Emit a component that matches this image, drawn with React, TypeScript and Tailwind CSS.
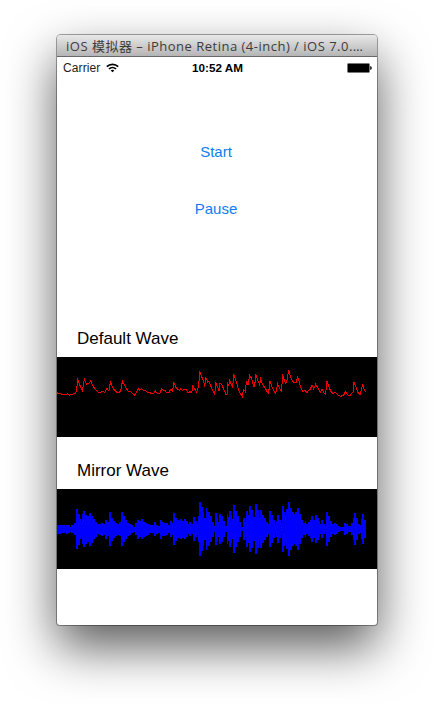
const BARS: [number, number][] = [
  // [x offset in px, amplitude in px]
  [0, 4.5], [2, 4.5], [4, 4.3], [6, 4], [8, 2.5], [9, 4.5], [11, 4], [13, 2.5], [14, 4], [15.5, 4], [17, 6],
  [19, 20], [21, 15.5], [23, 10], [24.3, 7.5], [25, 15], [26, 18], [28, 14.5], [30, 13], [32, 16.5], [34, 13.5], [36, 10], [38, 7.5], [40, 5],
  [42, 5.5], [44, 6.5], [46, 5.5], [48, 9.5], [50, 7], [52, 16.8], [54, 11.5], [56, 8.5], [58, 6.5], [60, 5.5], [62, 7], [64, 17],
  [66, 13], [68, 9.5], [70, 6.5], [72, 5.5], [74, 4], [76, 2.5], [78, 6], [80, 9.5], [82, 8], [83.5, 10], [85.5, 7.5], [87.5, 6.5],
  [89.5, 5.5], [91.5, 4], [93.5, 4], [95, 4], [97, 7], [99, 4.5], [101, 3.5], [103, 9.5], [105, 7.3], [107, 6.5], [109, 5.8], [111, 4],
  [112.5, 8], [114.5, 6], [116, 16], [118, 11.5], [120, 9], [122, 8], [123, 10], [125, 8.5], [127, 9.7], [129, 8.3], [131, 5], [132.3, 7], [134, 5],
  [135.5, 12], [137.5, 8], [139.5, 6], [140.5, 13], [142, 27], [144, 22], [146, 17], [147.3, 11], [148.5, 21], [150.3, 17], [151.7, 17.3], [153, 13],
  [155, 7.5], [157, 3], [158, 16], [160, 12], [161, 7.5], [162.3, 15.3], [164.3, 13.3], [166.3, 8], [168.3, 3], [169.7, 15.3], [171, 12], [172, 18],
  [174, 14], [175.3, 10], [176, 24], [178, 18], [180, 12.7], [182, 7.5], [184, 2], [186.3, 11.3], [188.3, 7.5], [189.3, 18], [191.3, 14],
  [192, 22.7], [194, 18.7], [196, 12], [198, 24.7], [200, 19.3], [202, 11.5], [203, 18.7], [205, 14], [207, 10.7], [209, 7.5], [211, 5],
  [212, 18], [214, 14], [216, 9], [218, 4], [219.3, 8], [220.3, 14], [222.3, 9], [224, 6], [225, 23], [227, 17.3], [228.3, 14],
  [229.3, 20], [231, 27.3], [233, 21.3], [235, 16.7], [237, 15.3], [238.3, 17.3], [240, 21.3], [242, 14.7], [244, 9.3], [245.7, 6],
  [247.7, 8], [249.3, 4.7], [250.7, 7.3], [252.7, 9.3], [254.3, 13.3], [256.3, 9], [258, 14], [260, 10.7], [262, 8], [263, 5.3],
  [264.3, 9.3], [266.3, 4.7], [268, 3.3], [269, 17.3], [271, 12.7], [273, 8], [275, 5.3], [277, 6], [279, 5.3], [281, 2.7], [283, 2],
  [285, 2], [287, 6], [289, 5.3], [291, 2.7], [293, 2.7], [294.3, 6], [296, 11.3], [297, 16.3], [299, 10.7], [301, 5.3], [303, 4],
  [304.3, 10], [305.3, 14.7], [307, 8.7], [308.5, 6],
];

// Waveform in red, drawn with samples falling towards the previous bar's foot before each attack.
const RED: [number, number][] = [
  [0, 98], [6, 100], [12, 101], [20, 104], [26, 105], [33, 101], [39, 106], [48, 103], [57, 100], [61, 88], [63, 55], [66, 66], [72, 80], [78, 92], [81, 68], [84, 59], [90, 73], [97, 70], [103, 62], [109, 77], [115, 86], [121, 92], [127, 99], [133, 97], [139, 94], [145, 98], [151, 85], [157, 93], [162, 66], [168, 82], [174, 90], [180, 96], [186, 98], [192, 94], [198, 63], [204, 76], [210, 87], [216, 94], [222, 95], [228, 101], [235, 106], [240, 96], [246, 86], [250, 91], [255, 85], [262, 92], [268, 93], [274, 97], [280, 98], [286, 101], [292, 99], [297, 93], [303, 101], [310, 102], [315, 87], [321, 91], [328, 93],
];
const RED_MID: [number, number][] = [
  [9, 91], [15, 92], [21, 97], [27, 99], [33, 88], [39, 94], [42, 66], [48, 81], [54, 88], [60, 91], [64, 86], [68, 92], [74, 87], [78, 87], [85, 98], [91, 95], [96, 98], [99, 78], [105, 87], [111, 96], [117, 76], [120, 32], [126, 50], [132, 65], [135, 80], [138, 51], [144, 66], [148, 65], [152, 75], [158, 90], [165, 104], [168, 67], [174, 83], [178, 92], [180, 70], [187, 74], [192, 88], [199, 104], [202, 104], [204, 71], [207, 76], [210, 61], [216, 77], [219, 82], [222, 43], [228, 60], [234, 80], [240, 98], [248, 110], [251, 88], [257, 95], [260, 62], [265, 75], [270, 46], [276, 56], [282, 80], [285, 80], [288, 41], [294, 60], [300, 75], [303, 58], [309, 74], [315, 82], [321, 91], [325, 99],
];
const RED_END: [number, number][] = [
  [0, 78], [5, 86], [11, 98], [15, 101], [18, 62], [24, 78], [30, 92], [36, 101], [42, 72], [48, 84], [54, 97], [56, 43], [62, 62], [66, 70], [70, 60], [75, 31], [80, 50], [86, 63], [91, 68], [97, 68], [102, 50], [107, 68], [112, 84], [118, 95], [124, 91], [130, 98], [135, 90], [140, 88], [145, 74], [150, 87], [156, 73], [162, 83], [170, 97], [175, 86], [181, 100], [186, 103], [189, 62], [195, 78], [201, 94], [208, 101], [216, 97], [223, 106], [232, 109], [240, 105], [246, 94], [252, 105], [259, 108], [265, 98], [268, 96], [271, 66], [277, 82], [283, 98], [290, 104], [293, 88], [297, 71], [301, 86], [306, 96],
];

const LINE = [
  ...RED.map(([x, y]) => [x / 3 - 0.5, y / 3 + 3]),
  ...RED_MID.map(([x, y]) => [x / 3 + 102.7, y / 3 + 3]),
  ...RED_END.map(([x, y]) => [x / 3 + 206.7, y / 3 + 3]),
];
const linePath = 'M' + LINE.map(([x, y]) => `${x.toFixed(1)} ${y.toFixed(1)}`).join('L');

function stepEdge(sign: number) {
  return BARS.flatMap(([x, a], i) => {
    const end = i < BARS.length - 1 ? BARS[i + 1][0] : 309;
    return [`${x} ${40 + sign * a}`, `${end} ${40 + sign * a}`];
  });
}
const mirrorPath = 'M' + [...stepEdge(-1), ...stepEdge(1).reverse()].join('L') + 'Z';

function StatusBar() {
  return (
    <div className="grid h-5 grid-cols-3 items-center pl-1.5 pr-[5px] text-[12px] leading-5 text-black">
      <div className="flex items-center gap-1.5">
        <span className="tracking-[0.1px] text-[#222]">Carrier</span>
        <svg width="13" height="10" viewBox="0 0 13 10" fill="none" stroke="#000" strokeWidth="1.7">
          <path d="M0.8 3.7C4 .5 9 .5 12.2 3.7" />
          <path d="M3 6C5 4 8 4 10 6" />
          <path d="M6.5 9.3 4.7 7.5Q6.5 6 8.3 7.5Z" fill="#000" stroke="none" />
        </svg>
      </div>
      <div className="whitespace-nowrap pt-px text-center text-[11.7px] font-bold">10:52 AM</div>
      <div className="flex justify-end">
        <svg width="25" height="10" viewBox="0 0 25 10">
          <rect x="0.5" y="0.5" width="22" height="9" rx="1" fill="#000" stroke="#777" />
          <path d="M23 3Q25 3.5 25 5T23 7Z" fill="#333" />
        </svg>
      </div>
    </div>
  );
}

export default function App() {
  return (
    <div className="flex h-[704px] w-[434px] justify-center overflow-hidden bg-white pt-[35px] font-['Liberation_Sans',Arial,sans-serif]">
      <div className="h-[590px] w-80 rounded-t-[4px] rounded-b-[3px] bg-white shadow-[0_0_0_1px_rgba(0,0,0,0.35),0_22px_50px_rgba(0,0,0,0.65)]">
        <div className="h-[22px] overflow-hidden rounded-t-[4px] border-b border-[#686868] bg-linear-to-b from-[#e8e8e8] to-[#b5b5b5] pl-[9px] font-['Open_Sans','Noto_Sans_CJK_SC',sans-serif] text-[13px] leading-[23px] tracking-[0.5px] whitespace-nowrap text-[#3c3c3c]">
          iOS 模拟器 – iPhone Retina (4-inch) / iOS 7.0.…
        </div>
        <StatusBar />
        <div className="flex flex-col items-center pt-[66px] pr-0.5 text-[15px] leading-[18px] text-[#127bf4]">
          <button>Start</button>
          <button className="mt-[39px]">Pause</button>
        </div>
        <h2 className="mt-[111px] h-[28px] pl-5 text-[17px] leading-5 text-black">Default Wave</h2>
        <svg width="320" height="80" viewBox="0 0 320 80" className="block bg-black">
          <path d={linePath} fill="none" stroke="#ee0000" strokeWidth="1" shapeRendering="crispEdges" />
        </svg>
        <h2 className="mt-[24px] h-[28px] pl-5 text-[17px] leading-5 text-black">Mirror Wave</h2>
        <svg width="320" height="80" viewBox="0 0 320 80" className="block bg-black">
          <path d={mirrorPath} fill="#0000ff" shapeRendering="crispEdges" />
        </svg>
      </div>
    </div>
  );
}
